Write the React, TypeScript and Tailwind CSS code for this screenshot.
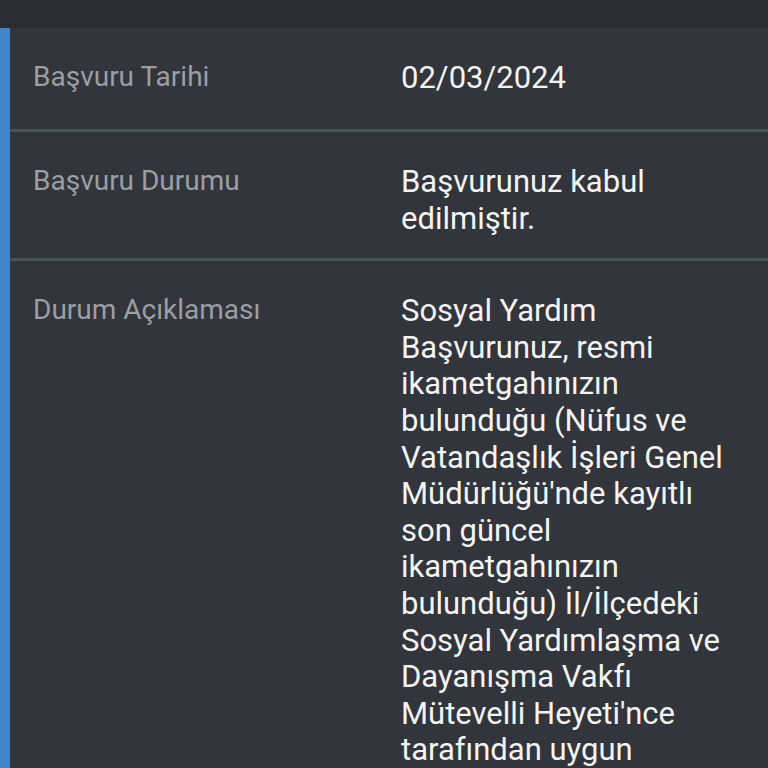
import React from "react";

const rows: { label: string; lines: string[]; extra?: string }[] = [
  { label: "Başvuru Tarihi", lines: ["02/03/2024"], extra: "min-h-[104px]" },
  { label: "Başvuru Durumu", lines: ["Başvurunuz kabul", "edilmiştir."] },
  {
    label: "Durum Açıklaması",
    lines: [
      "Sosyal Yardım",
      "Başvurunuz, resmi",
      "ikametgahınızın",
      "bulunduğu (Nüfus ve",
      "Vatandaşlık İşleri Genel",
      "Müdürlüğü'nde kayıtlı",
      "son güncel",
      "ikametgahınızın",
      "bulunduğu) İl/İlçedeki",
      "Sosyal Yardımlaşma ve",
      "Dayanışma Vakfı",
      "Mütevelli Heyeti'nce",
      "tarafından uygun",
      "görülmüştür.",
    ],
  },
];

export default function App() {
  return (
    <div
      className="w-[768px] h-[768px] overflow-hidden bg-[#32353c] flex flex-col"
      style={{ fontFamily: "Roboto, 'Noto Sans', sans-serif" }}
    >
      <div className="h-[28px] shrink-0 bg-[#2a2d33]" />
      <div className="flex flex-1">
        <div className="w-[10px] shrink-0 bg-[#3f87c9]" />
        <div className="flex-1 flex flex-col">
          {rows.map((r, i) => (
            <div
              key={i}
              className={`flex items-start pt-[32px] pb-[21px] ${i < rows.length - 1 ? "border-b-[3px] border-[#4d5159]" : ""} ${r.extra ?? ""}`}
            >
              <div className="w-[391px] shrink-0 pl-[23px] text-[28px] leading-[36.6px] text-[#9b9ea3] -mt-[1px]">
                {r.label}
              </div>
              <div className="text-[31px] leading-[36.6px] text-[#f4f4f4]">
                {r.lines.map((l, j) => (
                  <div key={j} className="whitespace-nowrap">
                    {l}
                  </div>
                ))}
              </div>
            </div>
          ))}
        </div>
      </div>
    </div>
  );
}
